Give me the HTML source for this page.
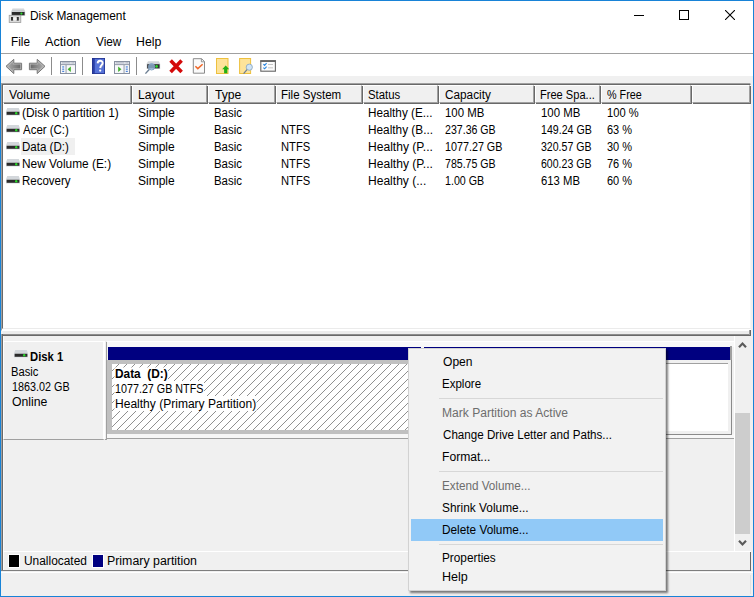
<!DOCTYPE html>
<html><head><meta charset="utf-8"><title>Disk Management</title>
<style>
html,body{margin:0;padding:0}
body{width:754px;height:597px;overflow:hidden;background:#f0f0f0;position:relative;font-family:"Liberation Sans",sans-serif}
.a{position:absolute}
.t{position:absolute;font:12px/12px "Liberation Sans",sans-serif;white-space:pre;transform-origin:0 0;color:#000}
.hc{position:absolute;top:85px;height:16px;background:#f0f0f0;border-top:1px solid #fff;border-left:1px solid #fff;border-right:1px solid #a0a0a0;border-bottom:1px solid #a0a0a0;box-shadow:1px 1px 0 #696969}
</style></head><body>
<!-- window frame -->
<div class="a" style="left:0;top:0;width:752px;height:595px;border:1px solid #1883d7"></div>
<!-- title + menu + toolbar (white) -->
<div class="a" style="left:1px;top:1px;width:752px;height:75px;background:#fff"></div>
<div class="a" style="left:1px;top:53px;width:752px;height:1px;background:#a0a0a0"></div>
<!-- caption buttons -->
<div class="a" style="left:634px;top:15px;width:10px;height:1px;background:#000"></div>
<div class="a" style="left:679px;top:10px;width:8px;height:8px;border:1px solid #000"></div>
<svg class="a" style="left:725px;top:10px" width="10" height="10"><path d="M0 0L10 10M10 0L0 10" stroke="#000" stroke-width="1.1"/></svg>
<!-- list view -->
<div class="a" style="left:1px;top:83px;width:750px;height:248px;background:#fff;border-left:1px solid #a0a0a0;border-top:1px solid #a0a0a0;border-right:1px solid #fff;border-bottom:1px solid #fff;box-sizing:border-box"></div>
<div class="a" style="left:2px;top:84px;width:749px;height:245px;border-left:1px solid #696969;border-top:1px solid #696969;border-right:1px solid #f6f6f6;border-bottom:1px solid #ebebeb;box-sizing:border-box"></div>
<!-- header cells -->
<div class="hc" style="left:3px;width:126px"></div>
<div class="hc" style="left:132px;width:73px"></div>
<div class="hc" style="left:208px;width:65px"></div>
<div class="hc" style="left:276px;width:84px"></div>
<div class="hc" style="left:363px;width:73px"></div>
<div class="hc" style="left:439px;width:93px"></div>
<div class="hc" style="left:535px;width:63px"></div>
<div class="hc" style="left:601px;width:88px"></div>
<div class="hc" style="left:692px;width:56px"></div>
<!-- selected row bg -->
<div class="a" style="left:21px;top:138px;width:54px;height:17px;background:#f0f0f0"></div>
<!-- bottom pane -->
<div class="a" style="left:3px;top:331px;width:746px;height:3px;background:#ececec"></div>
<div class="a" style="left:1px;top:334px;width:750px;height:1px;background:#8c8c8c"></div>
<div class="a" style="left:1px;top:335px;width:750px;height:1px;background:#696969"></div>
<div class="a" style="left:749px;top:330px;width:1px;height:5px;background:#a0a0a0"></div>
<div class="a" style="left:750px;top:330px;width:1px;height:6px;background:#696969"></div>
<div class="a" style="left:1px;top:334px;width:1px;height:237px;background:#a0a0a0"></div>
<div class="a" style="left:2px;top:334px;width:1px;height:237px;background:#696969"></div>
<div class="a" style="left:3px;top:336px;width:1px;height:234px;background:#fbfbfb"></div>
<div class="a" style="left:1px;top:570px;width:750px;height:1px;background:#7e7e7e"></div>
<div class="a" style="left:750px;top:552px;width:1px;height:19px;background:#696969"></div>
<!-- disk label box -->
<div class="a" style="left:3px;top:341px;width:99px;height:97px;border-left:1px solid #fff;border-top:1px solid #fff;border-right:2px solid #fff;border-bottom:1px solid #a0a0a0;background:#f0f0f0"></div>
<div class="a" style="left:106px;top:342px;width:1px;height:98px;background:#a0a0a0"></div>
<div class="a" style="left:105px;top:439px;width:2px;height:1px;background:#a0a0a0"></div>
<!-- graph area -->
<div class="a" style="left:107px;top:341px;width:627px;height:1px;background:#fff"></div>
<div class="a" style="left:107px;top:342px;width:627px;height:5px;background:#f8f8f8"></div>
<div class="a" style="left:107px;top:438px;width:628px;height:1px;background:#a0a0a0"></div>
<div class="a" style="left:734px;top:336px;width:1px;height:215px;background:#fff"></div>
<!-- partition header bar -->
<div class="a" style="left:108px;top:347px;width:622px;height:13px;background:#000080"></div>
<div class="a" style="left:730px;top:346px;width:2px;height:14px;background:#a0a0a0"></div>
<div class="a" style="left:107px;top:434px;width:627px;height:4px;background:#f7f7f7"></div>
<div class="a" style="left:421px;top:346px;width:3px;height:14px;background:#f7f7f7"></div>
<!-- selected partition -->
<div class="a" style="left:107px;top:360px;width:316px;height:74px;background:#c0c0c0"></div>
<svg class="a" style="left:112px;top:364px;background:#fff" width="308" height="66"><defs><pattern id="hp" width="8" height="8" patternUnits="userSpaceOnUse" patternTransform="translate(-1,0)"><path d="M-1 9L9 -1M-1 1L1 -1M7 9L9 7" stroke="#7c7c7c" stroke-width=".85"/></pattern></defs><rect width="308" height="66" fill="url(#hp)"/>
<rect x="2.5" y="3.5" width="53.5" height="14" fill="#fff"/><rect x="2.5" y="17" width="89.5" height="15" fill="#fff"/><rect x="2.5" y="32" width="142" height="15" fill="#fff"/></svg>
<!-- right partition -->
<div class="a" style="left:423px;top:360px;width:308px;height:74px;background:#f0f0f0"></div>
<div class="a" style="left:731px;top:360px;width:1px;height:75px;background:#8a8a8a"></div>
<div class="a" style="left:423px;top:434px;width:309px;height:1px;background:#8a8a8a"></div>
<div class="a" style="left:424px;top:363px;width:304px;height:68px;background:#fff;border-top:1px solid #a0a0a0;box-sizing:border-box"></div>
<!-- scrollbar -->
<div class="a" style="left:735px;top:336px;width:16px;height:215px;background:#f0f0f0"></div>
<div class="a" style="left:735px;top:413px;width:15px;height:121px;background:#cdcdcd"></div>
<svg class="a" style="left:735px;top:336px" width="16" height="215"><path d="M4 11.2L7.5 7.6L11 11.2" fill="none" stroke="#5a5a5a" stroke-width="2.2"/><path d="M4 204.8L7.5 208.4L11 204.8" fill="none" stroke="#5a5a5a" stroke-width="2.2"/></svg>
<!-- legend -->
<div class="a" style="left:3px;top:551px;width:748px;height:1px;background:#fff"></div>
<div class="a" style="left:8px;top:554px;width:10px;height:12px;background:#000;border:1px solid #fff"></div>
<div class="a" style="left:92px;top:554px;width:10px;height:12px;background:#000080;border:1px solid #fff"></div>
<!-- status bar -->
<div class="a" style="left:750px;top:575px;width:1px;height:19px;background:#e2e2e2"></div>
<div class="a" style="left:1px;top:572px;width:752px;height:1px;background:#fff"></div>
<!-- title icon -->
<svg class="a" style="left:8px;top:7px" width="19" height="17" viewBox="0 0 19 17">
<defs><linearGradient id="gt" x1="0" y1="0" x2="0" y2="1"><stop offset="0" stop-color="#e4e6e8"/><stop offset="1" stop-color="#b8bcc0"/></linearGradient></defs>
<g transform="translate(0,.4)"><path d="M4.6 .8H15.8L17.2 4.4H3.2Z" fill="url(#gt)"/>
<rect x="3.2" y="4.2" width="14" height="4.4" fill="#cfd3d6"/>
<rect x="3.8" y="4.6" width="12.8" height="3.2" fill="#2c2c2c"/>
<circle cx="13.4" cy="6.2" r="1.1" fill="#2bdc2b"/></g>
<rect x="1.2" y="8.3" width="11.6" height="7.2" fill="#dadada" stroke="#9c9c9c" stroke-width=".8"/>
<rect x="3" y="10" width="2.2" height="3.6" fill="#333"/><rect x="8.6" y="10" width="2.2" height="3.6" fill="#333"/>
<rect x="5.2" y="10.4" width="3.4" height="2.8" fill="#f4f4f4"/>
</svg>
<!-- toolbar -->
<svg class="a" style="left:0;top:54px" width="300" height="24" viewBox="0 0 300 24">
<defs>
<linearGradient id="ga" x1="0" y1="0" x2="0" y2="1"><stop offset="0" stop-color="#b0b0b0"/><stop offset=".5" stop-color="#747474"/><stop offset="1" stop-color="#a4a4a4"/></linearGradient>
<linearGradient id="gb" x1="0" y1="0" x2="1" y2="0"><stop offset="0" stop-color="#a8a8a8"/><stop offset="1" stop-color="#6a6a6a"/></linearGradient>
<linearGradient id="gf" x1="0" y1="0" x2="1" y2="0"><stop offset="0" stop-color="#6a6a6a"/><stop offset="1" stop-color="#a8a8a8"/></linearGradient>
<linearGradient id="gh" x1="0" y1="0" x2="1" y2="0"><stop offset="0" stop-color="#2a49b8"/><stop offset=".5" stop-color="#4f74df"/><stop offset="1" stop-color="#2a49b8"/></linearGradient>
</defs>
<!-- back / forward -->
<path d="M6 12.3L13.8 5.3V9.2H21.6V15.7H13.8V19.6Z" fill="#b6b6b6" stroke="#787878" stroke-width="1" stroke-linejoin="round"/>
<path d="M8.2 12.3L12.7 8.3V10.5H20.3V14.4H12.7V16.5Z" fill="url(#gb)"/>
<path d="M45 12.3L37.2 5.3V9.2H29.4V15.7H37.2V19.6Z" fill="#b6b6b6" stroke="#787878" stroke-width="1" stroke-linejoin="round"/>
<path d="M42.8 12.3L38.3 8.3V10.5H30.7V14.4H38.3V16.5Z" fill="url(#gf)"/>
<rect x="51" y="3" width="1" height="18" fill="#8c8c8c"/>
<!-- console tree 1 -->
<g transform="translate(60,7)">
<rect x=".5" y=".5" width="15" height="12" fill="#f7f8fa" stroke="#8890a0"/>
<rect x="1" y="1" width="14" height="2.2" fill="#e6e9ef"/><rect x="1.8" y="1.5" width="8.6" height=".8" fill="#9da4b3"/><rect x="1" y="3.2" width="14" height=".9" fill="#8890a0"/>
<rect x="5.6" y="4" width=".9" height="8.5" fill="#8890a0"/>
<rect x="2.2" y="5.4" width="2" height="1.1" fill="#3b78d8"/><rect x="2.2" y="7.6" width="2" height="1.1" fill="#3b78d8"/><rect x="2.2" y="9.8" width="2" height="1.1" fill="#3b78d8"/>
<path d="M10.8 5.4V11L7.6 8.2Z" fill="#3fae2a"/>
<rect x="11.6" y="1.4" width="1" height="1" fill="#8890a0"/><rect x="13.3" y="1.4" width="1" height="1" fill="#8890a0"/>
</g>
<rect x="82" y="3" width="1" height="18" fill="#8c8c8c"/>
<!-- help -->
<rect x="92" y="4" width="13" height="16" fill="#5572d8"/>
<rect x="92" y="4" width="2.8" height="16" fill="#2b3fa6"/>
<rect x="92.4" y="4.4" width="12.2" height="15.2" fill="none" stroke="#24348f" stroke-width=".8"/>
<path d="M97.6 9.2C97.6 6 102.6 6 102.6 8.9C102.6 11 100.2 11.4 100.2 14" fill="none" stroke="#8a94c4" stroke-width="1.7" transform="translate(.6,.5)"/>
<path d="M97.6 9.2C97.6 6 102.6 6 102.6 8.9C102.6 11 100.2 11.4 100.2 14" fill="none" stroke="#fff" stroke-width="1.8"/><circle cx="100.2" cy="16.6" r="1.15" fill="#fff"/>
<!-- console tree 2 -->
<g transform="translate(114,7)">
<rect x=".5" y=".5" width="15" height="12" fill="#f7f8fa" stroke="#8890a0"/>
<rect x="1" y="1" width="14" height="2.2" fill="#e6e9ef"/><rect x="1.8" y="1.5" width="8.6" height=".8" fill="#9da4b3"/><rect x="1" y="3.2" width="14" height=".9" fill="#8890a0"/>
<rect x="9.6" y="4" width=".9" height="8.5" fill="#8890a0"/>
<rect x="11.8" y="5.4" width="2" height="1.1" fill="#3b78d8"/><rect x="11.8" y="7.6" width="2" height="1.1" fill="#3b78d8"/><rect x="11.8" y="9.8" width="2" height="1.1" fill="#3b78d8"/>
<path d="M4.2 5.4V11L7.4 8.2Z" fill="#3fae2a"/>
<rect x="11.6" y="1.4" width="1" height="1" fill="#8890a0"/><rect x="13.3" y="1.4" width="1" height="1" fill="#8890a0"/>
</g>
<rect x="136" y="3" width="1" height="18" fill="#8c8c8c"/>
<!-- drive + magnifier -->
<path d="M148 7.2H158.8L160.2 10H146.6Z" fill="#d2d6da"/>
<rect x="146.6" y="9.8" width="13.6" height="5.2" fill="#d2d6da"/>
<rect x="147.2" y="10.2" width="12.4" height="4.2" fill="#2c2c2c"/>
<circle cx="156.6" cy="12.4" r="1.3" fill="#2bdc2b"/>
<path d="M149.4 15.2L145.4 19.6" stroke="#6d7f93" stroke-width="1.4"/>
<circle cx="151.6" cy="12.8" r="3.2" fill="#9cc4ea" fill-opacity=".7" stroke="#7d9dbf" stroke-width=".9"/>
<!-- red X -->
<path d="M170.6 6.6L181.6 18M181.6 6.6L170.6 18" stroke="#d40a0a" stroke-width="3.6"/>
<!-- doc with check -->
<path d="M193.3 4.7H201.6L204.5 7.6V19.2H193.3Z" fill="#fafafa" stroke="#7d7d7d" stroke-width=".9"/>
<path d="M201.4 4.8V7.8H204.4" fill="none" stroke="#7d7d7d" stroke-width=".8"/>
<path d="M195.4 12.2L197.8 14.6L202.6 10.2" fill="none" stroke="#f0692a" stroke-width="1.5"/>
<!-- folder up -->
<rect x="216.5" y="4.5" width="11.5" height="15" fill="#fde39a" stroke="#edc03e"/>
<path d="M225.7 11.4L229.2 15.2H227.3V19.2H224.1V15.2H222.2Z" fill="#22b014"/>
<!-- folder search -->
<rect x="239.6" y="4.5" width="11" height="15" fill="#fde39a" stroke="#edc03e"/>
<path d="M247.4 15.2L243.6 19.6" stroke="#6d7f93" stroke-width="1.3"/>
<circle cx="249.3" cy="13.2" r="3.1" fill="#cfe4f6" stroke="#8fa9c2" stroke-width=".9"/>
<!-- checklist -->
<rect x="260.8" y="6.8" width="14.6" height="10.4" fill="#fbfbfb" stroke="#666" stroke-width="1.1"/>
<rect x="260.3" y="6.2" width="15.6" height="1.8" fill="#666"/>
<path d="M263.4 10.2L264.6 11.4L266.6 9.2M263.4 13.6L264.6 14.8L266.6 12.6" fill="none" stroke="#2a86e0" stroke-width="1.1"/>
<rect x="268" y="10" width="5" height=".9" fill="#bdbdbd"/><rect x="268" y="13.4" width="5" height=".9" fill="#bdbdbd"/>
</svg>
<svg class="a" style="left:6.2px;top:108.2px" width="14" height="8" viewBox="0 0 14 8"><path d="M1.2 0H12.8L14 3.6H0Z" fill="#d3d7db"/><rect x="0" y="3.4" width="14" height="4.2" fill="#dde1e4"/><rect x=".6" y="3.7" width="12.8" height="3.1" fill="#2b2b2b"/><circle cx="10.2" cy="5.3" r="1.2" fill="#28d628"/></svg>
<svg class="a" style="left:6.2px;top:125.2px" width="14" height="8" viewBox="0 0 14 8"><path d="M1.2 0H12.8L14 3.6H0Z" fill="#d3d7db"/><rect x="0" y="3.4" width="14" height="4.2" fill="#dde1e4"/><rect x=".6" y="3.7" width="12.8" height="3.1" fill="#2b2b2b"/><circle cx="10.2" cy="5.3" r="1.2" fill="#28d628"/></svg>
<svg class="a" style="left:6.2px;top:142.2px" width="14" height="8" viewBox="0 0 14 8"><path d="M1.2 0H12.8L14 3.6H0Z" fill="#d3d7db"/><rect x="0" y="3.4" width="14" height="4.2" fill="#dde1e4"/><rect x=".6" y="3.7" width="12.8" height="3.1" fill="#2b2b2b"/><circle cx="10.2" cy="5.3" r="1.2" fill="#28d628"/></svg>
<svg class="a" style="left:6.2px;top:159.2px" width="14" height="8" viewBox="0 0 14 8"><path d="M1.2 0H12.8L14 3.6H0Z" fill="#d3d7db"/><rect x="0" y="3.4" width="14" height="4.2" fill="#dde1e4"/><rect x=".6" y="3.7" width="12.8" height="3.1" fill="#2b2b2b"/><circle cx="10.2" cy="5.3" r="1.2" fill="#28d628"/></svg>
<svg class="a" style="left:6.2px;top:176.2px" width="14" height="8" viewBox="0 0 14 8"><path d="M1.2 0H12.8L14 3.6H0Z" fill="#d3d7db"/><rect x="0" y="3.4" width="14" height="4.2" fill="#dde1e4"/><rect x=".6" y="3.7" width="12.8" height="3.1" fill="#2b2b2b"/><circle cx="10.2" cy="5.3" r="1.2" fill="#28d628"/></svg>
<svg class="a" style="left:14px;top:349.8px" width="14" height="8" viewBox="0 0 14 8"><path d="M1.2 0H12.8L14 3.6H0Z" fill="#d3d7db"/><rect x="0" y="3.4" width="14" height="4.2" fill="#dde1e4"/><rect x=".6" y="3.7" width="12.8" height="3.1" fill="#2b2b2b"/><circle cx="10.2" cy="5.3" r="1.2" fill="#28d628"/></svg>

<!-- context menu -->
<div class="a" style="left:408px;top:348px;width:256px;height:241px;background:#f2f2f2;border:1px solid #d2d2d2;box-shadow:2px 2px 2px rgba(0,0,0,.5)"></div>
<div class="a" style="left:411px;top:519px;width:252px;height:22px;background:#91c9f7"></div>
<div class="a" style="left:439px;top:398px;width:224px;height:1px;background:#d7d7d7"></div>
<div class="a" style="left:439px;top:471px;width:224px;height:1px;background:#d7d7d7"></div>
<div class="a" style="left:439px;top:544px;width:224px;height:1px;background:#d7d7d7"></div>
<span class="t" style="left:29.61px;top:10.0px;transform:scaleX(0.9903);">Disk Management</span>
<span class="t" style="left:10.72px;top:36.0px;transform:scaleX(0.9778);">File</span>
<span class="t" style="left:44.90px;top:36.0px;transform:scaleX(1.0577);">Action</span>
<span class="t" style="left:95.61px;top:36.0px;transform:scaleX(0.9850);">View</span>
<span class="t" style="left:136.48px;top:36.0px;transform:scaleX(1.0245);">Help</span>
<span class="t" style="left:9.10px;top:89.0px;transform:scaleX(1.0244);">Volume</span>
<span class="t" style="left:137.59px;top:89.0px;transform:scaleX(1.0086);">Layout</span>
<span class="t" style="left:214.51px;top:89.0px;transform:scaleX(1.0142);">Type</span>
<span class="t" style="left:281.04px;top:89.0px;transform:scaleX(0.9601);">File System</span>
<span class="t" style="left:367.85px;top:89.0px;transform:scaleX(0.9484);">Status</span>
<span class="t" style="left:445.12px;top:89.0px;transform:scaleX(0.9813);">Capacity</span>
<span class="t" style="left:540.38px;top:89.0px;transform:scaleX(0.9233);">Free Spa...</span>
<span class="t" style="left:607.21px;top:89.0px;transform:scaleX(0.8980);">% Free</span>
<span class="t" style="left:22.32px;top:107.0px;transform:scaleX(0.9943);">(Disk 0 partition 1)</span>
<span class="t" style="left:137.60px;top:107.0px;transform:scaleX(1.0001);">Simple</span>
<span class="t" style="left:213.75px;top:107.0px;transform:scaleX(0.9510);">Basic</span>
<span class="t" style="left:367.82px;top:107.0px;transform:scaleX(0.9770);">Healthy (E...</span>
<span class="t" style="left:444.75px;top:107.0px;transform:scaleX(0.9510);">100 MB</span>
<span class="t" style="left:540.85px;top:107.0px;transform:scaleX(0.9510);">100 MB</span>
<span class="t" style="left:606.67px;top:107.0px;transform:scaleX(0.9299);">100 %</span>
<span class="t" style="left:23.22px;top:124.0px;transform:scaleX(0.9555);">Acer (C:)</span>
<span class="t" style="left:137.60px;top:124.0px;transform:scaleX(1.0001);">Simple</span>
<span class="t" style="left:213.75px;top:124.0px;transform:scaleX(0.9510);">Basic</span>
<span class="t" style="left:281.27px;top:124.0px;transform:scaleX(0.9317);">NTFS</span>
<span class="t" style="left:367.82px;top:124.0px;transform:scaleX(0.9848);">Healthy (B...</span>
<span class="t" style="left:445.19px;top:124.0px;transform:scaleX(0.8831);">237.36 GB</span>
<span class="t" style="left:540.91px;top:124.0px;transform:scaleX(0.8861);">149.24 GB</span>
<span class="t" style="left:607.05px;top:124.0px;transform:scaleX(0.9162);">63 %</span>
<span class="t" style="left:22.44px;top:141.0px;transform:scaleX(0.9609);">Data (D:)</span>
<span class="t" style="left:137.60px;top:141.0px;transform:scaleX(1.0001);">Simple</span>
<span class="t" style="left:213.75px;top:141.0px;transform:scaleX(0.9510);">Basic</span>
<span class="t" style="left:281.27px;top:141.0px;transform:scaleX(0.9317);">NTFS</span>
<span class="t" style="left:367.79px;top:141.0px;transform:scaleX(1.0057);">Healthy (P...</span>
<span class="t" style="left:444.80px;top:141.0px;transform:scaleX(0.8961);">1077.27 GB</span>
<span class="t" style="left:541.25px;top:141.0px;transform:scaleX(0.8802);">320.57 GB</span>
<span class="t" style="left:607.03px;top:141.0px;transform:scaleX(0.9172);">30 %</span>
<span class="t" style="left:22.41px;top:158.0px;transform:scaleX(0.9900);">New Volume (E:)</span>
<span class="t" style="left:137.60px;top:158.0px;transform:scaleX(1.0001);">Simple</span>
<span class="t" style="left:213.75px;top:158.0px;transform:scaleX(0.9510);">Basic</span>
<span class="t" style="left:281.27px;top:158.0px;transform:scaleX(0.9317);">NTFS</span>
<span class="t" style="left:367.79px;top:158.0px;transform:scaleX(1.0057);">Healthy (P...</span>
<span class="t" style="left:445.21px;top:158.0px;transform:scaleX(0.8827);">785.75 GB</span>
<span class="t" style="left:541.28px;top:158.0px;transform:scaleX(0.8797);">600.23 GB</span>
<span class="t" style="left:607.09px;top:158.0px;transform:scaleX(0.9149);">76 %</span>
<span class="t" style="left:22.44px;top:175.0px;transform:scaleX(0.9567);">Recovery</span>
<span class="t" style="left:137.60px;top:175.0px;transform:scaleX(1.0001);">Simple</span>
<span class="t" style="left:213.75px;top:175.0px;transform:scaleX(0.9510);">Basic</span>
<span class="t" style="left:281.27px;top:175.0px;transform:scaleX(0.9317);">NTFS</span>
<span class="t" style="left:367.80px;top:175.0px;transform:scaleX(1.0041);">Healthy (...</span>
<span class="t" style="left:444.81px;top:175.0px;transform:scaleX(0.8895);">1.00 GB</span>
<span class="t" style="left:541.24px;top:175.0px;transform:scaleX(0.9414);">613 MB</span>
<span class="t" style="left:607.05px;top:175.0px;transform:scaleX(0.9162);">60 %</span>
<span class="t" style="left:29.76px;top:351.0px;font-weight:bold;transform:scaleX(0.9389);">Disk 1</span>
<span class="t" style="left:11.47px;top:366.0px;transform:scaleX(0.9330);">Basic</span>
<span class="t" style="left:11.50px;top:381.0px;transform:scaleX(0.8993);">1863.02 GB</span>
<span class="t" style="left:11.86px;top:396.0px;transform:scaleX(1.0217);">Online</span>
<span class="t" style="left:114.61px;top:368.0px;font-weight:bold;transform:scaleX(0.9878);">Data  (D:)</span>
<span class="t" style="left:114.70px;top:383.0px;transform:scaleX(0.8957);">1077.27 GB NTFS</span>
<span class="t" style="left:114.60px;top:398.0px;transform:scaleX(1.0033);">Healthy (Primary Partition)</span>
<span class="t" style="left:23.67px;top:555.0px;transform:scaleX(0.9925);">Unallocated</span>
<span class="t" style="left:107.17px;top:555.0px;transform:scaleX(1.0302);">Primary partition</span>
<span class="t" style="left:442.87px;top:356.0px;transform:scaleX(1.0044);">Open</span>
<span class="t" style="left:442.44px;top:378.0px;transform:scaleX(0.9594);">Explore</span>
<span class="t" style="left:442.39px;top:407.0px;color:#6d6d6d;transform:scaleX(1.0056);">Mark Partition as Active</span>
<span class="t" style="left:442.83px;top:429.0px;transform:scaleX(0.9672);">Change Drive Letter and Paths...</span>
<span class="t" style="left:442.39px;top:451.0px;transform:scaleX(1.0094);">Format...</span>
<span class="t" style="left:442.42px;top:480.0px;color:#6d6d6d;transform:scaleX(0.9755);">Extend Volume...</span>
<span class="t" style="left:442.41px;top:502.0px;transform:scaleX(0.9906);">Shrink Volume...</span>
<span class="t" style="left:442.42px;top:524.0px;transform:scaleX(0.9841);">Delete Volume...</span>
<span class="t" style="left:442.42px;top:552.0px;transform:scaleX(0.9827);">Properties</span>
<span class="t" style="left:442.35px;top:571.0px;transform:scaleX(1.0459);">Help</span>
</body></html>
